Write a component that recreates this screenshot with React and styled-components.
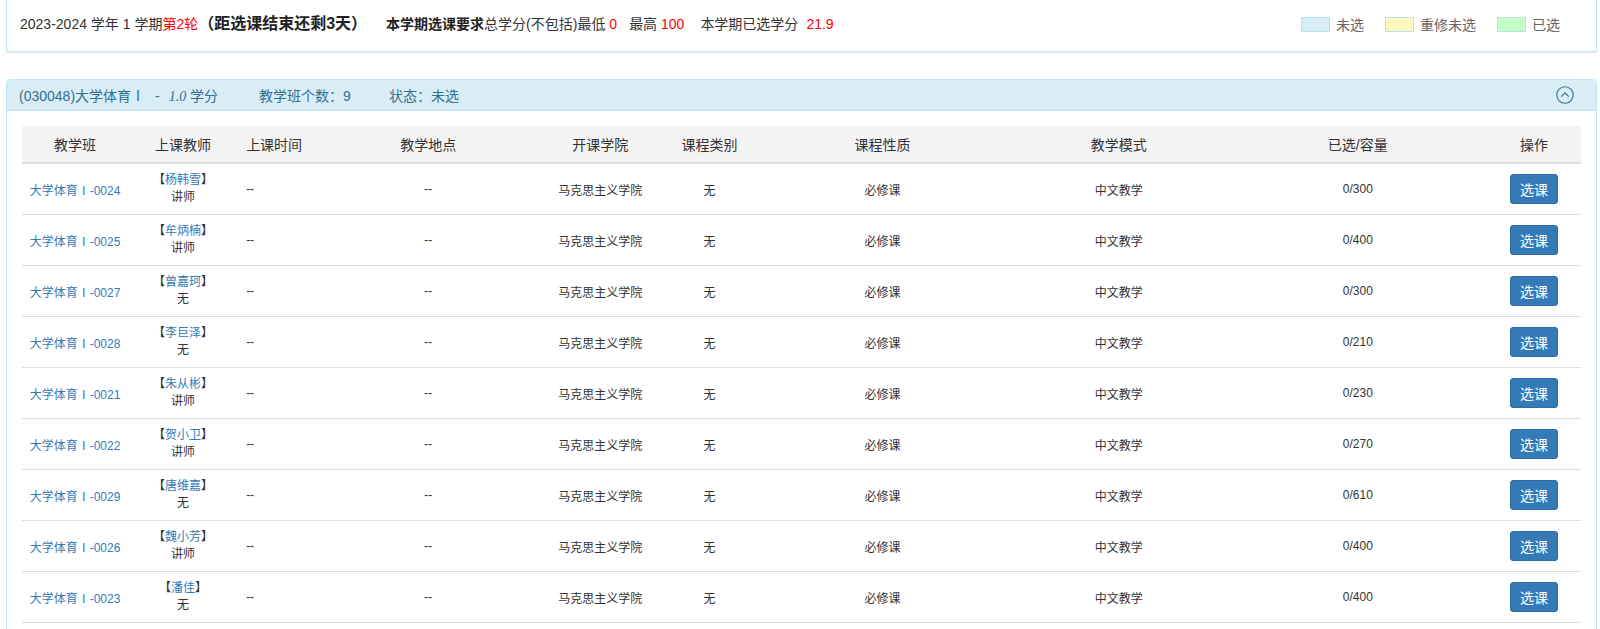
import React from 'react';
import styled, { createGlobalStyle } from 'styled-components';

const GlobalStyle = createGlobalStyle`
  html, body {
    margin: 0;
    padding: 0;
    background: #fff;
  }
  body {
    font-family: "Liberation Sans", Arial, "Noto Sans CJK SC", sans-serif;
    font-size: 13px;
    color: #333;
  }
`;

const rows = [
  { code: '0024', teacher: '杨韩雪', title: '讲师', cap: '0/300' },
  { code: '0025', teacher: '牟炳楠', title: '讲师', cap: '0/400' },
  { code: '0027', teacher: '曾嘉珂', title: '无', cap: '0/300' },
  { code: '0028', teacher: '李巨泽', title: '无', cap: '0/210' },
  { code: '0021', teacher: '朱从彬', title: '讲师', cap: '0/230' },
  { code: '0022', teacher: '贺小卫', title: '讲师', cap: '0/270' },
  { code: '0029', teacher: '唐维嘉', title: '无', cap: '0/610' },
  { code: '0026', teacher: '魏小芳', title: '讲师', cap: '0/400' },
  { code: '0023', teacher: '潘佳', title: '无', cap: '0/400' },
];

const columns = [
  { label: '教学班', width: 106 },
  { label: '上课教师', width: 110 },
  { label: '上课时间', width: 80, left: true },
  { label: '教学地点', width: 220 },
  { label: '开课学院', width: 124 },
  { label: '课程类别', width: 94 },
  { label: '课程性质', width: 252 },
  { label: '教学模式', width: 220 },
  { label: '已选/容量', width: 258 },
  { label: '操作', width: 94 },
];

const legend = [
  { label: '未选', color: '#d9edf7' },
  { label: '重修未选', color: '#fff7bd' },
  { label: '已选', color: '#c4ffc6' },
];

const Page = () => {
  return (
    <>
      <GlobalStyle />
      <Wrapper>
        <InfoBar>
          <InfoText>
            2023-2024 学年 1 学期<Red>第2轮</Red>
            <Countdown>（距选课结束还剩3天）</Countdown>
          </InfoText>
          <InfoText $gap={19}>
            <b>本学期选课要求</b>总学分(不包括)最低 <Red>0</Red>
          </InfoText>
          <InfoText $gap={12}>
            最高 <Red>100</Red>
          </InfoText>
          <InfoText $gap={16}>
            本学期已选学分<Red $gap={8}>21.9</Red>
          </InfoText>
          <Legend>
            {legend.map((item) => (
              <LegendItem key={item.label}>
                <Swatch $color={item.color} />
                {item.label}
              </LegendItem>
            ))}
          </Legend>
        </InfoBar>

        <CoursePanel>
          <CourseHeading>
            <HeadingText>
              (030048)大学体育Ⅰ<Dash>-</Dash>
              <i>1.0</i> 学分
            </HeadingText>
            <HeadingText $gap={41}>教学班个数：9</HeadingText>
            <HeadingText $gap={38}>状态：未选</HeadingText>
            <Toggle>
              <svg width="18" height="18" viewBox="0 0 18 18" fill="none">
                <circle cx="9" cy="9" r="8.2" stroke="#31708f" strokeWidth="1.1" />
                <path d="M5.3 10.6 L9 6.9 L12.7 10.6" stroke="#31708f" strokeWidth="1.2" />
              </svg>
            </Toggle>
          </CourseHeading>
          <PanelBody>
            <Table>
              <colgroup>
                {columns.map((c) => (
                  <col key={c.label} style={{ width: c.width }} />
                ))}
              </colgroup>
              <thead>
                <tr>
                  {columns.map((c) => (
                    <Th key={c.label} $left={c.left}>
                      {c.label}
                    </Th>
                  ))}
                </tr>
              </thead>
              <tbody>
                {rows.map((r) => (
                  <tr key={r.code}>
                    <Td>
                      <Link>大学体育Ⅰ-{r.code}</Link>
                    </Td>
                    <Td>
                      <Teacher>
                        <span>
                          【<Link>{r.teacher}</Link>】
                        </span>
                        <span>{r.title}</span>
                      </Teacher>
                    </Td>
                    <Td $left>--</Td>
                    <Td>--</Td>
                    <Td>马克思主义学院</Td>
                    <Td>无</Td>
                    <Td>必修课</Td>
                    <Td>中文教学</Td>
                    <Td>{r.cap}</Td>
                    <Td>
                      <SelectButton>选课</SelectButton>
                    </Td>
                  </tr>
                ))}
              </tbody>
            </Table>
          </PanelBody>
        </CoursePanel>
      </Wrapper>
    </>
  );
};

const Wrapper = styled.div`
  padding: 0 3px 20px 6px;
`;

const InfoBar = styled.div`
  display: flex;
  align-items: center;
  height: 48px;
  padding: 0 36px 3px 13px;
  border: 1px solid #bce8f1;
  border-top: none;
  border-radius: 0 0 3px 3px;
  box-shadow: 0 1px 2px rgba(0, 0, 0, 0.12);
  background: #fff;
`;

const InfoText = styled.span`
  margin-left: ${(p) => p.$gap || 0}px;
  font-size: 14px;
  line-height: 20px;
  color: #333;
  white-space: nowrap;

  b {
    font-weight: bold;
    color: #222;
  }
`;

const Red = styled.span`
  margin-left: ${(p) => p.$gap || 0}px;
  color: #f00;
`;

const Countdown = styled.span`
  font-size: 16px;
  font-weight: bold;
  color: #222;
`;

const Legend = styled.div`
  display: flex;
  align-items: center;
  gap: 21px;
  margin-left: auto;
`;

const LegendItem = styled.span`
  display: flex;
  align-items: center;
  gap: 6px;
  font-size: 14px;
  color: #666;
`;

const Swatch = styled.span`
  display: inline-block;
  width: 27px;
  height: 13px;
  border: 1px solid #b6e2ef;
  background: ${(p) => p.$color};
`;

const CoursePanel = styled.div`
  margin-top: 27px;
  border: 1px solid #bce8f1;
  border-radius: 4px;
  background: #fff;
`;

const CourseHeading = styled.div`
  display: flex;
  align-items: center;
  height: 30px;
  padding: 0 22px 0 12px;
  background: #d9edf7;
  border-bottom: 1px solid #bce8f1;
  border-radius: 3px 3px 0 0;
  color: #31708f;
`;

const HeadingText = styled.span`
  margin-left: ${(p) => p.$gap || 0}px;
  font-size: 14px;
  white-space: nowrap;

  i {
    font-family: "Liberation Serif", serif;
    font-style: italic;
  }
`;

const Dash = styled.span`
  margin: 0 9px 0 10px;
`;

const Toggle = styled.span`
  display: flex;
  margin-left: auto;
`;

const PanelBody = styled.div`
  padding: 15px;
`;

const Table = styled.table`
  width: 100%;
  table-layout: fixed;
  border-collapse: collapse;
`;

const Th = styled.th`
  height: 36px;
  padding: 0 6px;
  background: #f4f4f4;
  border-bottom: 2px solid #ddd;
  font-size: 14px;
  font-weight: normal;
  color: #333;
  white-space: nowrap;
  text-align: ${(p) => (p.$left ? 'left' : 'center')};
  ${(p) => p.$left && 'padding-left: 8px;'}
`;

const Td = styled.td`
  height: 50px;
  padding: 0 4px;
  border-bottom: 1px solid #ddd;
  font-size: 12px;
  color: #333;
  white-space: nowrap;
  text-align: ${(p) => (p.$left ? 'left' : 'center')};
  vertical-align: middle;
  ${(p) => p.$left && 'padding-left: 8px;'}
`;

const Link = styled.span`
  color: #337ab7;
`;

const Teacher = styled.div`
  display: flex;
  flex-direction: column;
  align-items: center;
  line-height: 17px;
`;

const SelectButton = styled.button`
  width: 48px;
  height: 30px;
  padding: 0;
  border: 1px solid #2e6da4;
  border-radius: 3px;
  background: #337ab7;
  color: #fff;
  font-family: "Liberation Sans", "Noto Sans CJK SC", sans-serif;
  font-size: 14px;
  cursor: pointer;
`;

export default Page;
